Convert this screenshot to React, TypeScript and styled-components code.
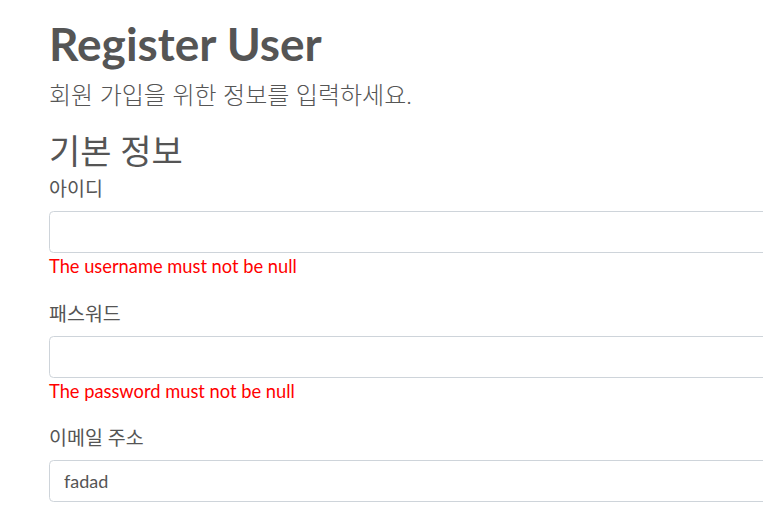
import React, { useState } from 'react';
import styled, { createGlobalStyle } from 'styled-components';

const GlobalStyle = createGlobalStyle`
  html, body {
    margin: 0;
    padding: 0;
    overflow: hidden;
    background: #fff;
  }
  body {
    font-family: Lato, "Noto Sans CJK KR", sans-serif;
    font-size: 18px;
    line-height: 1.5;
    color: #555;
  }
`;

const Page = styled.div`
  width: 1110px;
  padding: 16px 0 0 49px;
`;

const Title = styled.h1`
  margin: 0;
  font-size: 46px;
  font-weight: 700;
  line-height: 55px;
  color: #555;
`;

const Lead = styled.p`
  margin: 6px 0 18px;
  font-size: 24px;
  font-weight: 300;
  line-height: 36px;
`;

const SectionTitle = styled.h3`
  margin: 0 0 4px;
  font-size: 34px;
  font-weight: 400;
  line-height: 40px;
`;

const Field = styled.div`
  display: flex;
  flex-direction: column;
  margin-bottom: 19.5px;
`;

const Label = styled.label`
  margin-bottom: 9px;
  font-size: 19.5px;
  line-height: 27px;
`;

const Input = styled.input`
  box-sizing: border-box;
  width: 100%;
  height: 42px;
  padding: 0 14px;
  border: 1px solid #ced4da;
  border-radius: 4.5px;
  font: inherit;
  color: #555;
  background: #fff;
  outline: none;
`;

const ErrorText = styled.div`
  color: #ff0000;
  font-size: 18.3px;
  line-height: 27px;
`;

type FieldProps = {
  label: string;
  type?: string;
  value: string;
  error?: string;
  onChange: (v: string) => void;
};

function FormField({ label, type = 'text', value, error, onChange }: FieldProps) {
  return (
    <Field>
      <Label>{label}</Label>
      <Input type={type} value={value} onChange={(e) => onChange(e.target.value)} />
      {error && <ErrorText>{error}</ErrorText>}
    </Field>
  );
}

export default function App() {
  const [username, setUsername] = useState('');
  const [password, setPassword] = useState('');
  const [email, setEmail] = useState('fadad');

  return (
    <Page>
      <GlobalStyle />
      <Title>Register User</Title>
      <Lead>회원 가입을 위한 정보를 입력하세요.</Lead>
      <SectionTitle>기본 정보</SectionTitle>
      <FormField
        label="아이디"
        value={username}
        onChange={setUsername}
        error="The username must not be null"
      />
      <FormField
        label="패스워드"
        type="password"
        value={password}
        onChange={setPassword}
        error="The password must not be null"
      />
      <FormField label="이메일 주소" type="email" value={email} onChange={setEmail} />
    </Page>
  );
}
